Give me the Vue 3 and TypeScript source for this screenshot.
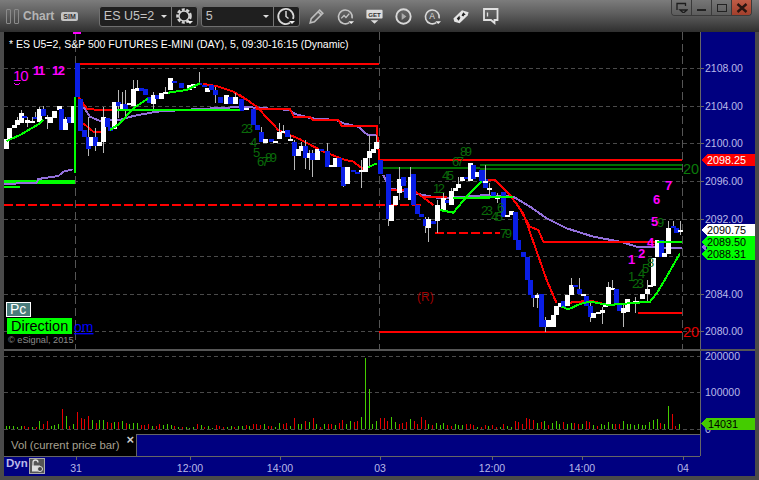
<script setup lang="ts">
type Bar = [number, number, number, number?, number?]

// candle rows: zoomed x, body top, body bottom, wick top, wick bottom (3x crop coords)
const toPage = (rows: Bar[], ox: number, oy: number, colors: string) =>
  rows.map((r, i) => {
    const x = Math.round(ox + r[0] / 3)
    const top = Math.round(oy + r[1] / 3)
    const bottom = Math.round(oy + r[2] / 3)
    return {
      x,
      top,
      h: Math.max(bottom - top, 2),
      wt: r[3] !== undefined ? oy + r[3] / 3 : top,
      wb: r[4] !== undefined ? oy + r[4] / 3 : bottom,
      white: colors[i] === 'w'
    }
  })

const dayOne = toPage([
  [18, 237, 267], [28, 203, 237], [42, 195, 205], [52, 180, 195, 170], [62, 158, 190, 150], [72, 168, 174], [82, 180, 190, 170, 200], [95, 182, 190, 172],
  [105, 172, 176, 155], [118, 147, 187, 140], [130, 148, 168, 138], [140, 172, 176, 165, 208], [150, 172, 190], [162, 153, 173], [176, 138, 150], [183, 148, 210], [196, 178, 210, 170], [207, 172, 188],
  [220, 138, 188], [230, 10, 110], [240, 118, 214], [252, 210, 232], [264, 230, 268, 170, 288], [272, 230, 258], [285, 232, 258, 205, 272], [297, 246, 258], [309, 170, 246, 140, 278],
  [320, 175, 200], [330, 200, 212], [342, 127, 208], [354, 127, 137, 90, 175], [365, 133, 147, 95], [376, 132, 147, 90, 170], [388, 130, 136], [400, 88, 137, 60], [412, 85, 92, 60], [422, 85, 92],
  [434, 88, 105], [447, 112, 130], [459, 105, 132, 95, 150], [471, 105, 118], [483, 98, 118], [495, 95, 100, 80], [510, 55, 90], [522, 63, 70], [544, 70, 84], [566, 75, 90], [580, 72, 84], [598, 68, 75, 35],
  [612, 75, 82], [622, 85, 95], [634, 75, 90], [646, 90, 106, 80, 130], [660, 110, 130], [678, 105, 133], [690, 112, 132], [706, 112, 132, 100], [724, 118, 153], [738, 145, 150]
], 0, 60, 'wwwwwbwwbwbwwwwbwbwbbbbwbwwbbwbwbwwwbbbwbwwwbbwwbbwbbbwbwbw')

const midSession = toPage([
  [38, 148, 195], [50, 195, 210], [62, 216, 246, 200], [75, 237, 250], [92, 237, 245], [105, 243, 248], [118, 215, 237, 190], [128, 212, 216, 195], [140, 210, 232], [150, 237, 241, 225],
  [163, 246, 288, 240, 330], [173, 268, 288], [183, 258, 272, 245], [196, 258, 294, 240, 328], [206, 280, 294, 270, 330], [217, 280, 300, 270, 350], [230, 268, 300], [242, 268, 272], [262, 274, 320, 250],
  [272, 315, 320], [285, 295, 320], [298, 294, 322], [308, 322, 378, 320, 382], [320, 322, 372], [340, 330, 336], [352, 335, 342], [364, 330, 335, 300, 385], [376, 295, 335], [388, 274, 295, 225, 320], [398, 268, 280], [408, 247, 268, 225],
  [421, 300, 342], [443, 342, 476, 342, 498], [454, 435, 482], [466, 408, 435], [478, 358, 400, 322, 420], [488, 352, 378], [498, 385, 415], [510, 352, 420, 322], [520, 342, 435], [532, 435, 462], [544, 462, 470],
  [555, 477, 498, 470, 518], [565, 477, 504, 470, 545], [578, 484, 492], [590, 436, 482, 420, 520], [610, 415, 450, 400], [622, 420, 430], [634, 394, 435, 385], [646, 383, 394], [654, 373, 385, 350], [666, 351, 362], [678, 352, 358],
  [690, 310, 362], [700, 316, 358], [712, 336, 352], [724, 330, 362], [736, 358, 384], [746, 385, 390]
], 240, 60, 'bbbwbwwwbwbwwbwbwbbwwbbwbbwwwwwbbwwwbbwbbbbwbwwbwwwwbwbwbbw')

const dayTwoEnd = toPage([
  [5, 90, 130], [16, 124, 128, 75], [26, 145, 150, 130, 165], [38, 155, 175], [50, 170, 176, 160, 190], [68, 155, 232], [82, 225, 230], [92, 212, 225], [106, 216, 300], [115, 300, 330], [128, 336, 350], [140, 350, 420],
  [150, 420, 465], [160, 465, 475, 465, 500], [172, 465, 475, 460, 505], [184, 462, 560], [196, 540, 560, 530, 575], [205, 540, 560], [218, 525, 560], [228, 498, 525], [240, 490, 500], [250, 484, 500], [262, 464, 498],
  [272, 435, 465, 415], [285, 435, 440], [297, 447, 462, 415], [310, 461, 465], [318, 468, 497], [330, 497, 532, 490, 545], [340, 518, 534], [353, 515, 518], [365, 510, 518, 500, 552], [375, 496, 500], [385, 441, 495, 425], [397, 445, 448, 420],
  [408, 448, 490], [418, 490, 512], [430, 503, 518, 490, 560], [442, 478, 515], [452, 485, 488], [464, 484, 488, 470, 518], [476, 482, 486], [487, 462, 478], [500, 448, 462, 420, 490], [510, 436, 440], [520, 355, 437],
  [532, 300, 352], [543, 300, 350], [553, 338, 350], [565, 264, 342, 242], [578, 258, 264, 242], [588, 264, 278], [600, 270, 274, 242, 285]
], 480, 140, 'bwwbwbwwbbbbbbwbbwwwwbwwbbwbbwwwwwwbbwwwwwwwwwwbwwbbw')

const candles = [...dayOne, ...midSession, ...dayTwoEnd]

const poly = (pts: number[][], ox: number, oy: number) =>
  pts.map(p => `${ox + p[0] / 3},${oy + p[1] / 3}`).join(' ')

const redLines = [
  poly([[235, 110], [262, 148], [340, 150]], 0, 60),
  poly([[250, 190], [280, 215], [305, 215]], 0, 60),
  poly([[610, 72], [650, 78], [700, 95], [750, 125]], 0, 60),
  poly([[0, 105], [50, 140], [115, 210], [180, 238], [250, 275], [310, 298], [340, 305], [370, 328]], 240, 60),
  poly([[45, 148], [150, 148], [162, 170], [210, 170], [218, 180], [295, 180], [305, 197], [410, 197], [418, 300]], 240, 60),
  poly([[450, 390], [520, 390], [580, 435]], 240, 60),
  poly([[550, 410], [620, 412]], 240, 60),
  poly([[0, 118], [45, 120], [90, 165], [130, 220], [165, 320], [200, 420], [230, 490]], 480, 140),
  poly([[110, 190], [150, 260], [175, 270], [190, 305], [530, 305]], 480, 140),
  poly([[250, 490], [330, 482], [385, 495]], 480, 140)
]

const purpleLines = [
  poly([[12, 372], [110, 368], [115, 357], [175, 348], [190, 335], [218, 328]], 0, 60),
  poly([[250, 140], [270, 170], [300, 183], [360, 180], [400, 168], [470, 155], [580, 148], [700, 142], [750, 142]], 0, 60),
  poly([[0, 140], [150, 150], [165, 162], [215, 175], [290, 180], [310, 190], [355, 200], [370, 215], [385, 225], [410, 225]], 240, 60),
  poly([[430, 345], [450, 385], [500, 395], [550, 405], [600, 415], [740, 405]], 240, 60),
  poly([[0, 165], [100, 170], [150, 200], [200, 235], [260, 265], [340, 290], [420, 305], [470, 320], [605, 325]], 480, 140)
]

const greenLines = [
  poly([[20, 243], [60, 225], [120, 190], [130, 180]], 0, 60),
  poly([[224, 340], [224, 110]], 0, 60),
  poly([[330, 210], [360, 190], [400, 145], [445, 115]], 0, 60),
  poly([[505, 98], [560, 90], [600, 70]], 0, 60),
  poly([[350, 150], [720, 150]], 0, 60),
  poly([[385, 322], [410, 310]], 240, 60),
  poly([[600, 450], [640, 458], [680, 410], [725, 365]], 240, 60),
  poly([[640, 414], [750, 414]], 240, 60),
  poly([[0, 172], [100, 172]], 480, 140),
  poly([[245, 500], [265, 508], [300, 492], [330, 485], [385, 495], [510, 485], [530, 460], [560, 410], [600, 340]], 480, 140),
  poly([[530, 305], [605, 305]], 480, 140)
]

const hGrid = [68, 106, 143, 181, 219, 256, 294, 331]
const vGrid = [75, 379, 682]

const countsGreen = [
  { x: 241, y: 133, t: '23' }, { x: 250, y: 147, t: '4' }, { x: 253, y: 157, t: '5' }, { x: 257, y: 166, t: '67' }, { x: 265, y: 162, t: '89' },
  { x: 433, y: 193, t: '12' }, { x: 442, y: 180, t: '45' }, { x: 452, y: 166, t: '67' }, { x: 460, y: 156, t: '89' },
  { x: 481, y: 215, t: '23' }, { x: 491, y: 221, t: '45' }, { x: 497, y: 212, t: '6' }, { x: 500, y: 238, t: '79' },
  { x: 628, y: 281, t: '1' }, { x: 632, y: 288, t: '23' }, { x: 638, y: 278, t: '4' }, { x: 642, y: 273, t: '5' }, { x: 647, y: 267, t: '8' }, { x: 657, y: 227, t: '9' }
]

const counts = [
  { x: 33, y: 75, t: '11' }, { x: 52, y: 75, t: '12' },
  { x: 628, y: 264, t: '1' }, { x: 638, y: 258, t: '2' }, { x: 647, y: 247, t: '4' },
  { x: 651, y: 226, t: '5' }, { x: 653, y: 204, t: '6' }, { x: 665, y: 190, t: '7' }
]

const prices = [
  { t: '2108.00', y: 68 }, { t: '2104.00', y: 106 }, { t: '2100.00', y: 143 }, { t: '2096.00', y: 181 },
  { t: '2092.00', y: 219 }, { t: '2084.00', y: 294 }, { t: '2080.00', y: 331 }
]

const priceTags = [
  { t: '2088.31', y: 254, bg: '#00ff00', fg: '#000' },
  { t: '2089.50', y: 242, bg: '#00ff00', fg: '#000' },
  { t: '2090.75', y: 230, bg: '#fff', fg: '#000' },
  { t: '2098.25', y: 160, bg: '#ff0000', fg: '#fff' }
]

// signed height in px, negative is a down bar
const volEarly = [3, 3, 3, 2, 3, -3, -2, 2, -2, 8, -5, -8, 3, 4, 5, -20, 13, -3, 5, -17, -11, -10, -13, 9, -6, 9, 9, -7, -6, 7, -7, 8, -6, 5, 6, 6, -4, -4, -5, 3, -3, -5, 4, 5, 4, -3, 2, -2, 2, 1, 2, -5, 4, -2, 3, 1, -4, -3, -2, 2, 3, -2, 3, 3, -4, 3]
const volLate = [-5, -5, -4, 5, -3, -3, 2, 6, -5, -6, 3, -11, 5, 5, -8, 7, -11, 5, -2, 5, -5, -5, 4, -6, -9, 5, 8, -7, -8, 12, 71, 40, 5, 8, -11, -11, -8, 12, 7, -5, -6, -7, 10, -8, -5, -12, -9, 5, -4, 6, 4, 6, -4, -3, 5, 4, 4, -5, -5, -4, 2, -2, -4, 3, -4, -2, 2, -5, 3, 2, -8, -7, -5, -11, -10, -9, 6, -7, 8, -4, 6, 8, 5, -7, 5, 6, -6, -5, 5, -8, -7, 4, -3, 5, 4, 7, 5, -5, -5, 8, 5, 5, 4, 5, 4, 4, 7, 9, 10, -6, 5, 23, -15, -3, 5]
const volBars = [
  ...volEarly.map((v, i) => ({ x: Math.round(5.7 + i * 3.75) + 0.5, h: Math.abs(v), up: v > 0 })),
  ...volLate.map((v, i) => ({ x: Math.round(252.7 + i * 3.74) + 0.5, h: Math.abs(v), up: v > 0 }))
]

const timeTicks = [
  { t: '31', x: 76 }, { t: '12:00', x: 190 }, { t: '14:00', x: 280 }, { t: '03', x: 380 },
  { t: '12:00', x: 492 }, { t: '14:00', x: 582 }, { t: '04', x: 683 }
]
</script>

<template>
  <div class="window">
    <header class="titlebar">
      <span class="grip"><i></i><i></i></span>
      <span class="app-name">Chart</span>
      <span class="sim">SIM</span>

      <div class="combo symbol">
        <span class="combo-field">ES U5=2<b class="caret"></b></span>
        <span class="combo-btn">
          <svg width="20" height="20" viewBox="0 0 20 20">
            <circle cx="10" cy="10" r="6.5" fill="none" stroke="#d4d4d4" stroke-width="2.6" stroke-dasharray="3 1.6" />
            <circle cx="10" cy="10" r="5" fill="none" stroke="#d4d4d4" stroke-width="1.4" />
            <path d="M13 15h6l-3 3z" fill="#eee" />
          </svg>
        </span>
      </div>

      <div class="combo interval">
        <span class="combo-field">5<b class="caret"></b></span>
        <span class="combo-btn">
          <svg width="20" height="20" viewBox="0 0 20 20">
            <path d="M14 16.8A7.6 7.6 0 1 1 17 13" fill="none" stroke="#d8d8d8" stroke-width="1.8" />
            <path d="M10 5v5.5l2.5 2" fill="none" stroke="#d8d8d8" stroke-width="1.5" />
            <path d="M13 15h6l-3 3z" fill="#eee" />
          </svg>
        </span>
      </div>

      <div class="tools">
        <svg viewBox="0 0 18 18">
          <path d="M3 15l1-4 8-8 3 3-8 8zM10.5 4.5l3 3" fill="none" stroke="#bdbdbd" stroke-width="1.5" />
        </svg>
        <svg viewBox="0 0 20 20">
          <path d="M14 16.5A7.3 7.3 0 1 1 17 12" fill="none" stroke="#c4c4c4" stroke-width="1.7" />
          <path d="M5.5 12l3-3 2 2 3.5-4" fill="none" stroke="#c4c4c4" stroke-width="1.4" />
          <path d="M13 15h6l-3 3z" fill="#eee" />
        </svg>
        <svg viewBox="0 0 20 20">
          <rect x="1.5" y="3" width="17" height="9" rx="1" fill="#ddd" />
          <text x="10" y="10.5" class="get-label">GET</text>
          <path d="M6 14h8l-4 3.5z" fill="#ddd" />
        </svg>
        <svg viewBox="0 0 18 18">
          <circle cx="9" cy="9" r="6.8" fill="none" stroke="#d8d8d8" stroke-width="1.8" />
          <path d="M7.3 5.8l4.5 3.2-4.5 3.2z" fill="#aaa" />
        </svg>
        <svg viewBox="0 0 20 20">
          <path d="M14 16.5A7.3 7.3 0 1 1 17 12" fill="none" stroke="#d8d8d8" stroke-width="1.7" />
          <text x="9.5" y="13" class="auto-label">A</text>
          <path d="M13 15h6l-3 3z" fill="#eee" />
        </svg>
        <svg viewBox="0 0 20 18">
          <path d="M1.5 11L10.5 2.5l7 2-1 3.5L8 16l-5.5-1.5z" fill="#e4e4e4" />
          <path d="M5 11l3-3v2h1l-2 3.5zM10 8l2-3.5 2.5 3H13l-1 1.5z" fill="#222" />
        </svg>
        <svg viewBox="0 0 18 19">
          <path d="M2.5 2h13.500v11h-3v3l-3.500-3h-7z" fill="none" stroke="#e0e0e0" stroke-width="1.8" />
          <path d="M6 5.5v4" stroke="#e0e0e0" stroke-width="1.3" />
        </svg>
      </div>

      <div class="win-buttons">
        <span class="win-btn">
          <svg width="12" height="11" viewBox="0 0 12 11">
            <path d="M1 8V1.5h8.5V4M4 8h7l-3.5 3z" fill="none" stroke="#1d1d1d" stroke-width="1.3" />
          </svg>
        </span>
        <span class="win-btn"><i class="min-glyph"></i></span>
        <span class="win-btn"><i class="max-glyph"></i></span>
        <span class="win-btn close">
          <svg width="12" height="10" viewBox="0 0 12 10">
            <path d="M1.5 1l9 8M10.5 1l-9 8" stroke="#2a1510" stroke-width="2.4" />
          </svg>
        </span>
      </div>
    </header>

    <div class="body">
      <section class="row main-row">
        <svg class="plot" width="696" height="317" viewBox="4 32 696 317">
          <line v-for="y in hGrid" :key="y" x1="4" x2="700" :y1="y + 0.5" :y2="y + 0.5" class="grid" />
          <line v-for="x in vGrid" :key="x" :x1="x + 0.5" :x2="x + 0.5" y1="32" y2="349" class="grid-v" />

          <text class="title" x="9" y="48">* ES U5=2, S&amp;P 500 FUTURES E-MINI (DAY), 5, 09:30-16:15 (Dynamic)</text>

          <rect x="4" y="186" width="16" height="2" fill="#00ff00" />
          <rect x="4" y="180" width="71" height="4" fill="#00ff00" />
          <rect x="73" y="32" width="8" height="2" fill="#ff00ff" />
          <rect x="77" y="63" width="302" height="2" fill="#ff0000" />
          <rect x="379" y="159" width="303" height="2" fill="#ff0000" />
          <rect x="379" y="331" width="303" height="2" fill="#ff0000" />
          <rect x="638" y="312" width="44" height="2" fill="#ff0000" />
          <rect x="383" y="167" width="97" height="2" fill="#007000" />
          <rect x="480" y="164" width="202" height="2" fill="#007000" />
          <rect x="480" y="168" width="202" height="2" fill="#007000" />
          <line x1="4" x2="421" y1="205" y2="205" class="ln red dash" />
          <line x1="435" x2="500" y1="233" y2="233" class="ln red dash" />

          <polyline v-for="(p, i) in purpleLines" :key="'p' + i" :points="p" class="ln purple" />
          <polyline v-for="(p, i) in redLines" :key="'r' + i" :points="p" class="ln red" />

          <g v-for="(c, i) in candles" :key="'c' + i">
            <line :x1="c.x + 0.5" :x2="c.x + 0.5" :y1="c.wt" :y2="c.wb" class="wick" />
            <rect :x="c.x - 2" :y="c.top" width="5" :height="c.h" :fill="c.white ? '#ffffff' : '#0a1ee6'" />
          </g>

          <polyline v-for="(p, i) in greenLines" :key="'g' + i" :points="p" class="ln green" />

          <text v-for="(n, i) in countsGreen" :key="'n' + i" :x="n.x" :y="n.y" class="count-green">{{ n.t }}</text>
          <text v-for="(n, i) in counts" :key="'m' + i" :x="n.x" :y="n.y" class="count">{{ n.t }}</text>
          <text x="13" y="81" class="count-big">10</text>
          <path d="M14 83q3 4 6 0" fill="none" stroke="#ff00ff" />
          <text x="417" y="301" class="marker">(R)</text>
          <text x="683" y="174" class="level dk">20</text>
          <text x="683" y="337" class="level rd">20</text>

          <rect x="6.5" y="302.5" width="24" height="14" fill="#4a7c7c" stroke="#fff" />
          <text x="10" y="314" class="pc">Pc</text>
          <text x="74" y="332" class="om">om</text>
          <rect x="7" y="318" width="65" height="16" fill="#00ff00" />
          <text x="11" y="331" class="direction">Direction</text>
          <text x="8" y="343" class="copyright">© eSignal, 2015</text>
        </svg>
        <svg class="axis" width="55" height="317" viewBox="700 32 55 317">
          <line x1="700.5" x2="700.5" y1="32" y2="349" class="axis-edge" />
          <g v-for="p in prices" :key="p.t">
            <line x1="701" x2="704" :y1="p.y + 0.5" :y2="p.y + 0.5" class="axis-tick" />
            <text x="705" :y="p.y + 4" class="axis-text">{{ p.t }}</text>
          </g>
          <path d="M701 247l5-4v8z" fill="#9370db" />
          <g v-for="t in priceTags" :key="t.t">
            <path :d="`M701 ${t.y}l6-6h48v12h-48z`" :fill="t.bg" />
            <text x="707" :y="t.y + 4" class="tag-text" :fill="t.fg">{{ t.t }}</text>
          </g>
        </svg>
      </section>

      <section class="row vol-row">
        <svg class="plot" width="696" height="83" viewBox="4 351 696 83">
          <line x1="4" x2="700" y1="356.5" y2="356.5" class="grid" />
          <line x1="4" x2="700" y1="392.5" y2="392.5" class="grid" />
          <line x1="4" x2="700" y1="429.5" y2="429.5" class="grid" />
          <line
            v-for="(b, i) in volBars"
            :key="i"
            :x1="b.x"
            :x2="b.x"
            y1="429"
            :y2="429 - b.h"
            :stroke="b.up ? '#44cc00' : '#e60000'"
            class="vol-bar"
          />
        </svg>
        <svg class="axis" width="55" height="83" viewBox="700 351 55 83">
          <line x1="700.5" x2="700.5" y1="351" y2="434" class="axis-edge" />
          <text x="705" y="360" class="axis-text">200000</text>
          <text x="705" y="396" class="axis-text">100000</text>
          <text x="705" y="433" class="axis-text">0</text>
          <path d="M701 423.5l6-6h48v12h-48z" fill="#44cc00" />
          <text x="708" y="427.5" class="tag-text" fill="#000">14031</text>
        </svg>
      </section>

      <section class="legend-row">
        <div class="legend">
          <span>Vol (current price bar)</span>
          <b class="legend-close">×</b>
        </div>
        <div class="legend-fill"></div>
        <div class="legend-axis"></div>
      </section>

      <section class="time-row">
        <div class="dyn">Dyn</div>
        <span class="lock">
          <svg width="14" height="14" viewBox="0 0 14 14">
            <path d="M3 7V3.5a2.5 2.5 0 0 1 5 0" fill="none" stroke="#ddd" stroke-width="1.3" />
            <rect x="2" y="6.5" width="8" height="6" fill="#ddd" />
            <circle cx="10" cy="10" r="2.5" fill="#444" stroke="#ddd" />
          </svg>
        </span>
        <svg class="time-axis" width="751" height="20" viewBox="4 456 751 20">
          <line x1="4" x2="700" y1="456.5" y2="456.5" class="axis-edge" />
          <g v-for="t in timeTicks" :key="t.t + t.x">
            <line :x1="t.x + 0.5" :x2="t.x + 0.5" y1="456" y2="460" class="axis-tick" />
            <text :x="t.x" y="472" class="time-text">{{ t.t }}</text>
          </g>
        </svg>
      </section>
    </div>
  </div>
</template>

<style>
html,
body {
  margin: 0;
  background: #333;
}
</style>

<style scoped>
.window {
  width: 759px;
  height: 480px;
  display: flex;
  flex-direction: column;
  overflow: hidden;
  background: #4a4a4a;
  font-family: "Liberation Sans", Arial, sans-serif;
}

.titlebar {
  height: 32px;
  flex: none;
  display: flex;
  align-items: center;
  padding-left: 6px;
  background: linear-gradient(#7c7c7c, #5c5c5c 45%, #2f2f2f);
}

.grip {
  display: flex;
  gap: 3px;
}

.grip i {
  width: 3px;
  height: 13px;
  border: 1px solid #8a8a8a;
  border-radius: 1px;
}

.app-name {
  margin-left: 4px;
  font-size: 12px;
  font-weight: bold;
  color: #b4b4b4;
}

.sim {
  margin-left: 7px;
  padding: 1px 2px;
  border-radius: 2px;
  background: #c4c4c4;
  color: #333;
  font-size: 7px;
  font-weight: bold;
  line-height: 7px;
}

.combo {
  display: flex;
  height: 21px;
  box-sizing: border-box;
  border: 1px solid #6f6f6f;
  border-radius: 3px;
  background: #1f1f1f;
  color: #c4c4c4;
  font-size: 12.5px;
}

.symbol {
  margin-left: 21px;
}

.interval {
  margin-left: 3px;
}

.combo-field {
  width: 72px;
  padding-left: 4px;
  box-sizing: border-box;
  display: flex;
  align-items: center;
  position: relative;
  border-right: 1px solid #777;
}

.caret {
  position: absolute;
  right: 4px;
  top: 8px;
  border: 3px solid transparent;
  border-top-color: #ddd;
  border-bottom: 0;
}

.combo-btn {
  width: 25px;
  display: flex;
  align-items: center;
  justify-content: center;
}

.tools {
  display: flex;
  align-items: center;
  gap: 10px;
  margin-left: 7px;
}

.tools svg {
  width: 19px;
  height: 19px;
}

.get-label {
  font-size: 6.5px;
  font-weight: bold;
  fill: #333;
  text-anchor: middle;
}

.auto-label {
  font-size: 9px;
  fill: #ddd;
  text-anchor: middle;
}

.win-buttons {
  align-self: flex-start;
  margin-left: auto;
  margin-right: 7px;
  display: flex;
  height: 15px;
  border: 1px solid #3a3a3a;
  border-top: 0;
  border-radius: 0 0 4px 4px;
  overflow: hidden;
}

.win-btn {
  width: 19px;
  display: flex;
  align-items: center;
  justify-content: center;
  background: linear-gradient(#767676, #5c5c5c);
  border-left: 1px solid #3a3a3a;
}

.win-btn:first-child {
  border-left: 0;
}

.close {
  background: linear-gradient(#c05c46, #a23f2c);
}

.min-glyph {
  width: 9px;
  height: 2px;
  margin-top: 5px;
  background: #222;
}

.max-glyph {
  width: 8px;
  height: 6px;
  border: 1px solid #222;
}

.body {
  flex: 1;
  display: flex;
  flex-direction: column;
  margin: 0 4px 4px;
  background: #000;
}

.row {
  display: flex;
  flex: none;
}

.main-row {
  height: 317px;
  border-bottom: 2px solid #555;
}

.vol-row {
  height: 83px;
}

.plot,
.axis,
.time-axis {
  display: block;
  flex: none;
  shape-rendering: crispEdges;
}

.plot {
  background: #000;
}

.axis {
  background: #000080;
}

.grid {
  stroke: #4a4a4a;
  stroke-dasharray: 4 3;
}

.grid-v {
  stroke: #555;
  stroke-dasharray: 8 4;
}

.title {
  font-size: 10.5px;
  fill: #fff;
}

.ln {
  fill: none;
  stroke-width: 2;
}

.red {
  stroke: #ff0000;
}

.green {
  stroke: #00ff00;
}

.purple {
  stroke: #9370db;
}

.dash {
  stroke-dasharray: 9 3;
}

.wick {
  stroke: #b8b8b8;
  stroke-width: 1;
}

.count-green {
  font-size: 13px;
  letter-spacing: -2.5px;
  fill: #0a6a0a;
}

.count {
  font-size: 13px;
  font-weight: bold;
  letter-spacing: -1.5px;
  fill: #ff00ff;
}

.count-big {
  font-size: 15px;
  letter-spacing: -1px;
  fill: #ff00ff;
}

.marker {
  font-size: 12px;
  fill: #a00000;
}

.level {
  font-size: 14.5px;
}

.dk {
  fill: #0a7a0a;
}

.rd {
  fill: #e00000;
}

.pc {
  font-size: 14px;
  fill: #fff;
}

.direction {
  font-size: 14.5px;
  fill: #000;
}

.om {
  font-size: 14px;
  fill: #0000ff;
  text-decoration: underline;
}

.copyright {
  font-size: 9.2px;
  fill: #8c8c8c;
}

.axis-edge {
  stroke: #666;
}

.axis-tick {
  stroke: #666;
}

.axis-text {
  font-size: 10.5px;
  fill: #b9b9e8;
}

.tag-text {
  font-size: 10.8px;
}

.vol-bar {
  stroke-width: 1;
}

.legend-row {
  height: 22px;
  flex: none;
  display: flex;
}

.legend {
  width: 132px;
  display: flex;
  justify-content: space-between;
  padding-left: 7px;
  box-sizing: border-box;
  align-items: center;
  color: #a8a090;
  font-size: 11.3px;
  background: #000;
}

.legend-close {
  align-self: flex-start;
  margin: -1px 2px 0 0;
  color: #ccc;
  font-size: 13px;
  line-height: 13px;
}

.legend-fill {
  width: 564px;
  background: #000080;
  border-top: 1px solid #666;
  border-left: 1px solid #666;
  box-sizing: border-box;
}

.legend-axis {
  flex: 1;
  background: #000080;
  border-left: 1px solid #666;
}

.time-row {
  height: 20px;
  flex: none;
  position: relative;
  background: #000080;
}

.time-axis {
  background: #000080;
}

.dyn {
  position: absolute;
  left: 2px;
  top: 1px;
  color: #b9b9e8;
  font-size: 11.5px;
  font-weight: bold;
}

.lock {
  position: absolute;
  left: 25px;
  top: 2px;
  width: 14px;
  height: 14px;
  border: 1px solid #aaa;
  background: #555;
  display: flex;
  align-items: center;
  justify-content: center;
}

.time-text {
  font-size: 10.5px;
  fill: #b9b9e8;
  text-anchor: middle;
}
</style>
